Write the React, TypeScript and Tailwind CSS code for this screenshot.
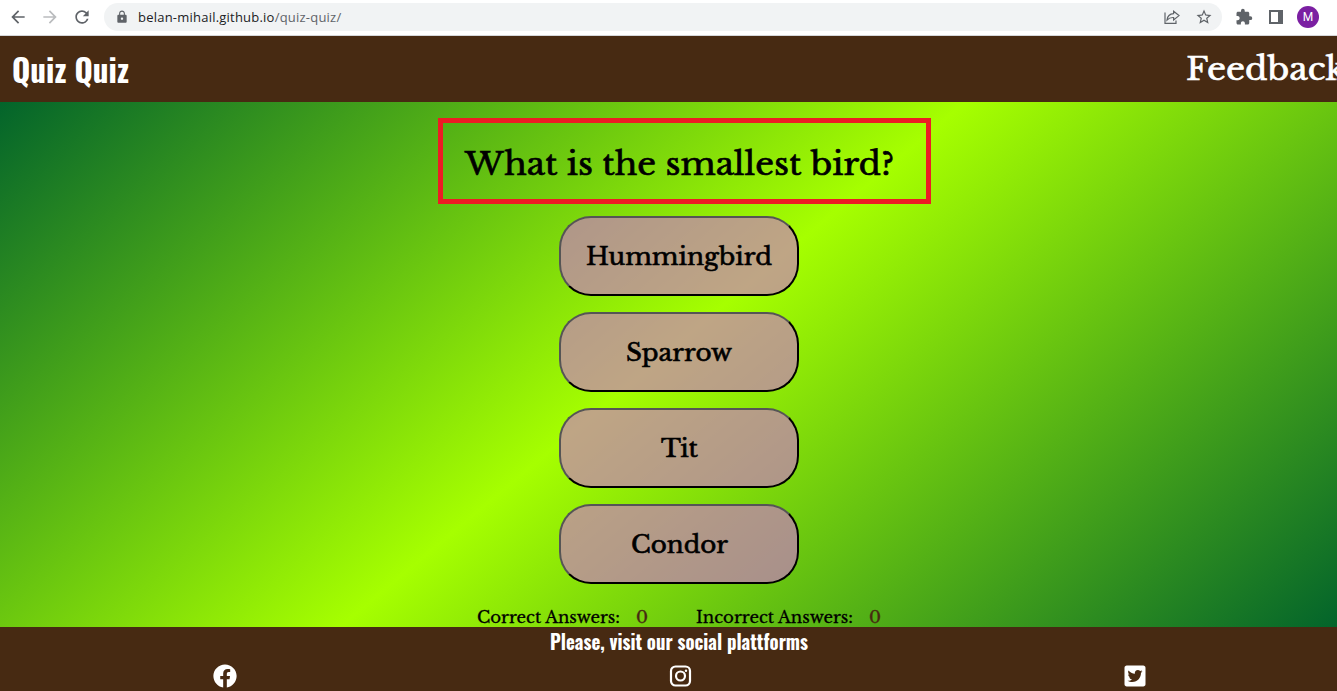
import { FaFacebook, FaTwitterSquare } from "react-icons/fa";
import { MdArrowBack, MdArrowForward, MdRefresh, MdLock, MdStarBorder, MdExtension } from "react-icons/md";

const answers = [
  { name: "Hummingbird", width: 186 },
  { name: "Sparrow", width: 106 },
  { name: "Tit", width: 37 },
  { name: "Condor", width: 97 },
];

function FitText({ text, width, size, y, height, className, weight = 400, stroke = 0 }: {
  text: string; width: number; size: number; y: number; height: number; className: string; weight?: number; stroke?: number;
}) {
  return (
    <svg width={width} height={height} className={`block shrink-0 overflow-visible ${className}`}>
      <text x="0" y={y} fontSize={size} fontWeight={weight} fill="currentColor" stroke="currentColor" strokeWidth={stroke} textLength={width} lengthAdjust="spacingAndGlyphs">{text}</text>
    </svg>
  );
}

const serif = "font-['Libre_Baskerville','Liberation_Serif',serif]";
const condensed = "font-['Oswald','Roboto',sans-serif]";

export default function App() {
  return (
    <div className="flex h-[691px] w-[1337px] flex-col overflow-hidden bg-[#472a12]">
      <div className="flex h-9 shrink-0 items-center border-b border-[#d5d7da] bg-white pb-px text-[#5f6368]">
        <MdArrowBack className="ml-2 size-5" />
        <MdArrowForward className="ml-3 size-5 text-[#babcbe]" />
        <MdRefresh className="ml-3 size-5" />
        <div className="ml-3 flex h-7 w-[1118px] items-center rounded-full bg-[#f1f3f4] pl-[11px] pr-[9px]">
          <MdLock className="size-[14px]" />
          <span className="ml-[9px] pt-px font-['Open_Sans',sans-serif] text-[13px] tracking-[0.22px]">
            <span className="text-[#202124]">belan-mihail.github.io</span>/quiz-quiz/
          </span>
          <svg className="ml-auto mr-px size-4" viewBox="0 0 16 16" fill="none" stroke="currentColor" strokeWidth="1.2">
            <path d="M1 3.500v10.900h11V11.500M9.600 2.200 15 6.600 9.600 11V8.500C6.300 8.300 4.500 9.400 3 11c.4-3.600 2.700-6 6.600-6.300z" />
          </svg>
          <MdStarBorder className="ml-[14px] size-[18px]" />
        </div>
        <MdExtension className="ml-[13px] size-[18px]" />
        <svg className="ml-4 h-[14px] w-[14px]" viewBox="0 0 14 14"><path fill="currentColor" fillRule="evenodd" d="M0 0h14v14H0zM2 2v10h7V2z" /></svg>
        <div className="ml-[14px] flex size-[22px] items-center justify-center rounded-full bg-[#7b1fa2] font-['Roboto',sans-serif] text-[12px] text-white">M</div>
      </div>
      <header className="flex h-[66px] w-[1358px] shrink-0 items-start justify-between pl-3 text-white">
        <FitText text="Quiz Quiz" width={117} size={32.5} y={47} height={66} weight={700} className={condensed} />
        <FitText text="Feedback" width={160} size={32} y={44} height={66} stroke={0.7} className={`mr-3 ${serif}`} />
      </header>
      <main className="flex h-[525px] w-[1337px] shrink-0 flex-col items-center bg-[linear-gradient(140deg,#03642b_0%,#a6ff00_49.2%,#03642b_100%)] pl-[21px] pt-4 text-black">
        <div className="ml-[11px] flex h-[86px] w-[493px] items-center border-[5px] border-[#ed1c24] pl-[22px]">
          <FitText text="What is the smallest bird?" width={429} size={32} y={52} height={76} stroke={0.7} className={serif} />
        </div>
        <div className="mt-3 flex flex-col gap-4">
          {answers.map((a) => (
            <button key={a.name} className="flex h-20 w-60 items-center justify-center rounded-[32px] border-2 border-t-[#555] border-l-[#555] border-r-black border-b-black bg-[#cb76ca]/66">
              <FitText text={a.name} width={a.width} size={24} y={47.3} height={76} stroke={0.6} className={serif} />
            </button>
          ))}
        </div>
        <div className="mt-6 flex">
          <FitText text="Correct Answers:" width={143} size={16} y={15} height={19} stroke={0.3} className={serif} />
          <FitText text="0" width={12} size={16} y={15} height={19} stroke={0.3} className={`ml-4 text-[#472a12] ${serif}`} />
          <FitText text="Incorrect Answers:" width={157} size={16} y={15} height={19} stroke={0.3} className={`ml-12 ${serif}`} />
          <FitText text="0" width={12} size={16} y={15} height={19} stroke={0.3} className={`ml-4 text-[#472a12] ${serif}`} />
        </div>
      </main>
      <footer className="flex h-16 w-[1358px] shrink-0 flex-col items-center text-white">
        <FitText text="Please, visit our social plattforms" width={258} size={19.6} y={23} height={37} weight={700} className={condensed} />
        <div className="flex w-full justify-between pl-[213px] pr-[211px]">
          <FaFacebook className="size-6" />
          <svg className="size-6" viewBox="0 0 24 24" fill="none" stroke="currentColor" strokeWidth="2.200">
            <rect x="3" y="2.500" width="19" height="19" rx="4.500" />
            <circle cx="12.500" cy="12" r="4.500" />
            <circle cx="18" cy="6.700" r="1.200" fill="currentColor" stroke="none" />
          </svg>
          <FaTwitterSquare className="size-6" />
        </div>
      </footer>
    </div>
  );
}
